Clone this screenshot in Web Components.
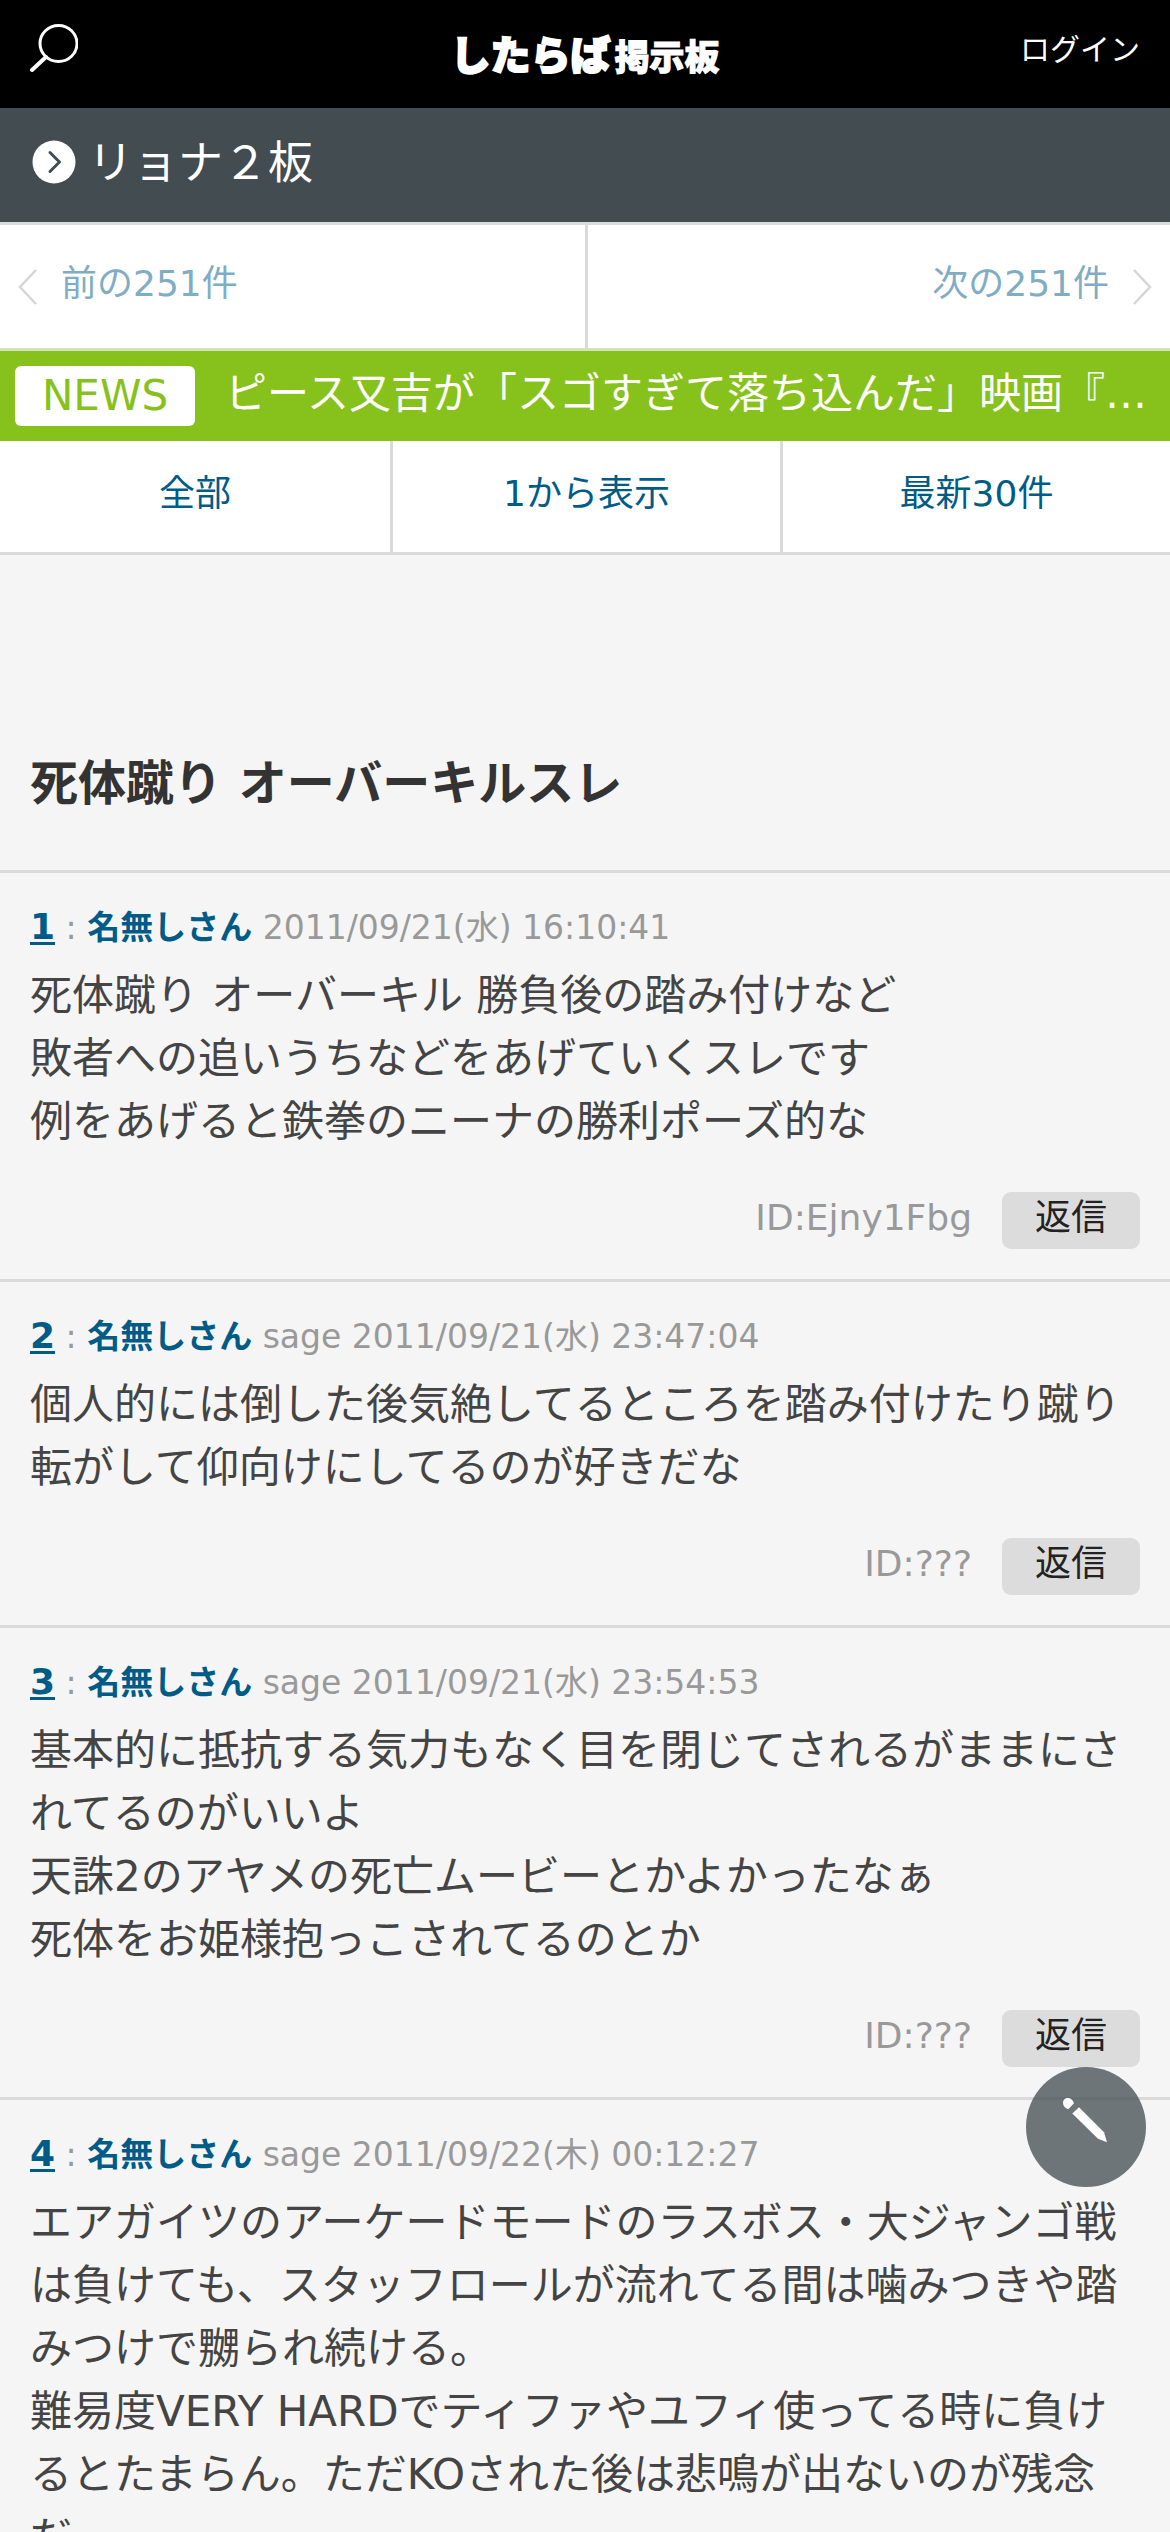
<!DOCTYPE html>
<html lang="ja">
<head>
<meta charset="utf-8">
<meta name="viewport" content="width=device-width">
<title>死体蹴り オーバーキルスレ - リョナ２板</title>
<style>
:root { --link: #005c87; --line: #dadada; --bg: #f5f5f5; }
body { margin: 0; background: var(--bg); color: #444; font-family: "DejaVu Sans", "Noto Sans CJK JP", sans-serif; font-size: 42px; line-height: 63px; }
</style>
</head>
<body>
<app-shell>
<site-header></site-header>
<board-bar>リョナ２板</board-bar>
<thread-pager></thread-pager>
<news-bar label="NEWS">ピース又吉が「スゴすぎて落ち込んだ」映画『…</news-bar>
<range-tabs></range-tabs>
<main>
<thread-title>死体蹴り オーバーキルスレ</thread-title>
<thread-post number="1" name="名無しさん" date="2011/09/21(水) 16:10:41" user="ID:Ejny1Fbg">死体蹴り オーバーキル 勝負後の踏み付けなど<br>敗者への追いうちなどをあげていくスレです<br>例をあげると鉄拳のニーナの勝利ポーズ的な</thread-post>
<thread-post number="2" name="名無しさん" date="sage 2011/09/21(水) 23:47:04" user="ID:???">個人的には倒した後気絶してるところを踏み付けたり蹴り転がして仰向けにしてるのが好きだな</thread-post>
<thread-post number="3" name="名無しさん" date="sage 2011/09/21(水) 23:54:53" user="ID:???">基本的に抵抗する気力もなく目を閉じてされるがままにされてるのがいいよ<br>天誅2のアヤメの死亡ムービーとかよかったなぁ<br>死体をお姫様抱っこされてるのとか</thread-post>
<thread-post number="4" name="名無しさん" date="sage 2011/09/22(木) 00:12:27">エアガイツのアーケードモードのラスボス・大ジャンゴ戦は負けても、スタッフロールが流れてる間は噛みつきや踏みつけで嬲られ続ける。<br>難易度VERY HARDでティファやユフィ使ってる時に負けるとたまらん。ただKOされた後は悲鳴が出ないのが残念だ。</thread-post>
</main>
<write-button slot="overlay"></write-button>
</app-shell>

<script>
const define = (name, html) => customElements.define(name, class extends HTMLElement {
  constructor() {
    super();
    const root = this.attachShadow({ mode: 'open' });
    root.innerHTML = typeof html === 'function' ? html(this) : html;
  }
});

define('app-shell', `
<style>
:host { display: block; position: relative; height: 100vh; overflow: hidden; }
.scroll { height: 100%; overflow-y: auto; scrollbar-width: none; }
</style>
<div class="scroll"><slot></slot></div>
<slot name="overlay"></slot>`);

define('site-header', `
<style>
:host { display: block; background: #000; color: #fff; }
header { display: grid; grid-template-columns: 1fr auto 1fr; align-items: center; height: 108px; padding: 0 30px; box-sizing: border-box; }
button { justify-self: start; padding: 0; border: 0; background: none; color: inherit; }
svg { display: block; }
.logo { display: flex; align-items: baseline; gap: 4px; color: inherit; text-decoration: none; font-family: "Noto Sans CJK JP", sans-serif; font-weight: 900; font-size: 40px; line-height: 60px; -webkit-text-stroke: 2px #fff; }
.logo small { font-size: 35px; -webkit-text-stroke-width: 1px; }
.login { justify-self: end; color: inherit; text-decoration: none; font-size: 30px; line-height: 45px; padding-bottom: 9px; }
</style>
<header>
<button type="button" aria-label="検索"><svg width="48" height="60" viewBox="0 0 48 60" fill="none" stroke="#fff" stroke-linecap="round"><ellipse cx="28.500" cy="19.500" rx="18.500" ry="18" stroke-width="3"/><path d="M16 33L2 46" stroke-width="4"/></svg></button>
<a class="logo" href="#"><span>したらば</span><small>掲示板</small></a>
<a class="login" href="#">ログイン</a>
</header>`);

define('board-bar', `
<style>
:host { display: block; background: #424c51; color: #fff; }
a { display: flex; align-items: center; gap: 12px; height: 114px; padding: 0 32px; color: inherit; text-decoration: none; font-size: 45px; line-height: 66px; box-sizing: border-box; }
svg { flex: none; margin-bottom: 6px; }
span { padding-bottom: 3px; }
</style>
<a href="#"><svg width="44" height="44" viewBox="0 0 44 44"><circle cx="22" cy="22" r="21.500" fill="#fff"/><path d="M18 12.500L27.500 22L18 31.500" fill="none" stroke="#424c51" stroke-width="3" stroke-linecap="round" stroke-linejoin="round"/></svg><span><slot></slot></span></a>`);

define('thread-pager', `
<style>
:host { display: block; background: #fff; border-top: 3px solid #d9dddd; border-bottom: 3px solid #d3e2bb; }
nav { display: grid; grid-template-columns: 1fr 1fr; }
a { display: flex; align-items: center; gap: 24px; height: 123px; padding: 0 18px; box-sizing: border-box; color: #80adc3; text-decoration: none; font-size: 36px; line-height: 54px; }
a span { padding-bottom: 6px; }
a + a { justify-content: flex-end; border-left: 3px solid var(--line); }
svg { flex: none; }
</style>
<nav>
<a href="#"><svg width="19" height="36" viewBox="0 0 19 36" fill="none" stroke="#d6d6d6" stroke-width="2.500"><path d="M18 1L2 18L18 35"/></svg><span>前の251件</span></a>
<a href="#"><span>次の251件</span><svg width="19" height="36" viewBox="0 0 19 36" fill="none" stroke="#d6d6d6" stroke-width="2.500"><path d="M1 1L17 18L1 35"/></svg></a>
</nav>`);

define('news-bar', el => `
<style>
:host { display: block; background: #87c11b; color: #fff; }
a { display: flex; align-items: center; gap: 30px; height: 90px; padding: 0 15px; box-sizing: border-box; color: inherit; text-decoration: none; }
b { flex: none; width: 180px; height: 60px; border-radius: 6px; background: #fff; color: #87c11b; font-weight: 400; line-height: 60px; text-align: center; }
span { flex: 1; min-width: 0; overflow: hidden; white-space: nowrap; text-overflow: ellipsis; padding-bottom: 6px; }
</style>
<a href="#"><b>${el.getAttribute('label')}</b><span><slot></slot></span></a>`);

define('range-tabs', `
<style>
:host { display: block; background: #fff; border-bottom: 3px solid var(--line); }
nav { display: grid; grid-template-columns: repeat(3, 1fr); }
a { display: grid; place-items: center; height: 111px; padding-bottom: 6px; box-sizing: border-box; color: var(--link); text-decoration: none; font-size: 36px; line-height: 54px; }
a + a { border-left: 3px solid var(--line); }
</style>
<nav><a href="#">全部</a><a href="#">1から表示</a><a href="#">最新30件</a></nav>`);

define('thread-title', `
<style>
:host { display: block; padding: 192px 30px 51px; border-bottom: 3px solid var(--line); color: #333; }
h1 { margin: 0; font-size: 48px; line-height: 72px; font-weight: 700; }
</style>
<h1><slot></slot></h1>`);

define('thread-post', el => `
<style>
:host { display: block; padding: 30px; border-bottom: 3px solid var(--line); }
header { font-size: 33px; line-height: 48px; color: #999; margin-bottom: 12px; }
header a { color: var(--link); font-size: 36px; font-weight: 700; text-underline-offset: 3px; text-decoration-thickness: 3px; }
header b { color: var(--link); }
footer { display: flex; justify-content: flex-end; align-items: center; gap: 30px; margin-top: 39px; font-size: 36px; line-height: 51px; color: #999; }
footer span { padding-bottom: 6px; }
button { height: 57px; width: 138px; padding: 0 0 6px; border: 0; border-radius: 9px; background: #dcdcdc; color: #222; font: inherit; }
</style>
<article>
<header><a href="#">${el.getAttribute('number')}</a> : <b>${el.getAttribute('name')}</b> ${el.getAttribute('date')}</header>
<div><slot></slot></div>
${el.hasAttribute('user') ? `<footer><span>${el.getAttribute('user')}</span><button type="button">返信</button></footer>` : ''}
</article>`);

define('write-button', `
<style>
:host { display: block; position: absolute; right: 24px; bottom: 345px; }
button { display: block; width: 120px; height: 120px; padding: 0; border: 0; border-radius: 50%; background: rgba(63, 73, 79, .75); }
svg { display: block; }
</style>
<button type="button" aria-label="書き込む"><svg width="120" height="120" viewBox="0 0 120 120" fill="#fff"><path d="M42.300 42.300L48 36.300C46.500 32.500 44.500 31 41.700 31C38.500 31 37 33.500 37 36C37 39 39 41 42.300 42.300Z"/><path d="M53 40.300L78 65.300L81 75.300L72 71.700L46.300 46.600Z"/></svg></button>`);
</script>
</body>
</html>
